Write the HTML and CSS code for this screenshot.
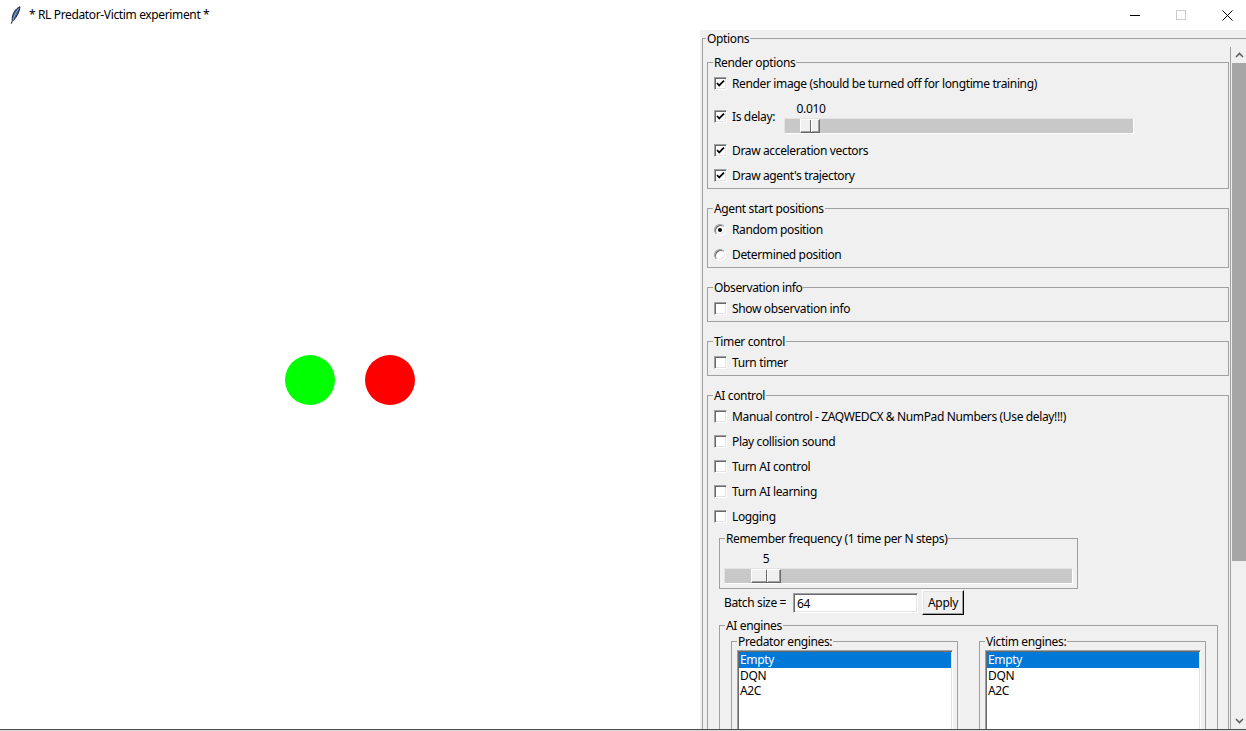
FILE: index.html
```html
<!DOCTYPE html>
<html>
<head>
<meta charset="utf-8">
<title>RL Predator-Victim experiment</title>
<link rel="stylesheet" href="styles.css">
</head>
<body>
<div class="window">
  <div class="titlebar">
    <svg class="feather" viewBox="0 0 12 18" width="12" height="18">
      <path d="M11 0.8 C6.5 2.5 3 7.5 3.2 14.5 L4.4 14.5 C7.5 11 10.4 6.5 11 0.8 Z" fill="#3f5f95" stroke="#16223a" stroke-width="1"/>
      <path d="M10 2.5 C7 6 5 10 3.8 14.6" fill="none" stroke="#b9c9e3" stroke-width="0.7"/>
      <path d="M3.6 14.4 L2.2 17.6" stroke="#16223a" stroke-width="1.1"/>
    </svg>
    <span class="title">* RL Predator-Victim experiment *</span>
    <div class="controls">
      <div class="ctl"><span class="ctl-min"></span></div>
      <div class="ctl"><span class="ctl-max"></span></div>
      <div class="ctl">
        <svg viewBox="0 0 11 11" width="11" height="11"><path d="M0.5 0.5 L10.5 10.5 M10.5 0.5 L0.5 10.5" stroke="#000" stroke-width="1"/></svg>
      </div>
    </div>
  </div>

  <div class="main">
    <div class="canvas">
      <div class="agent agent-green"></div>
      <div class="agent agent-red"></div>
    </div>

    <div class="panel">
      <div class="options">
        <div class="gtitle opt-title">Options</div>
        <div class="scrollwrap">
          <div class="content">

            <div class="frame section first">
              <div class="gtitle">Render options</div>
              <div class="row"><span class="cb"><svg viewBox="0 0 11 11"><path d="M2 5 L4.2 7.4 L9 2.6" /></svg></span><span>Render image (should be turned off for longtime training)</span></div>
              <div class="row delay-row">
                <div class="check delay-check"><span class="cb"><svg viewBox="0 0 11 11"><path d="M2 5 L4.2 7.4 L9 2.6" /></svg></span><span>Is delay:</span></div>
                <div class="slider delay-slider">
                  <div class="sval sval-delay">0.010</div>
                  <div class="trough trough-delay"><div class="thumb thumb-delay"></div></div>
                </div>
              </div>
              <div class="row"><span class="cb"><svg viewBox="0 0 11 11"><path d="M2 5 L4.2 7.4 L9 2.6" /></svg></span><span>Draw acceleration vectors</span></div>
              <div class="row"><span class="cb"><svg viewBox="0 0 11 11"><path d="M2 5 L4.2 7.4 L9 2.6" /></svg></span><span>Draw agent's trajectory</span></div>
            </div>

            <div class="frame section">
              <div class="gtitle">Agent start positions</div>
              <div class="row"><span class="rb rb-on"></span><span>Random position</span></div>
              <div class="row"><span class="rb"></span><span>Determined position</span></div>
            </div>

            <div class="frame section">
              <div class="gtitle">Observation info</div>
              <div class="row"><span class="cb"></span><span>Show observation info</span></div>
            </div>

            <div class="frame section">
              <div class="gtitle">Timer control</div>
              <div class="row"><span class="cb"></span><span>Turn timer</span></div>
            </div>

            <div class="frame section">
              <div class="gtitle">AI control</div>
              <div class="row"><span class="cb"></span><span>Manual control - ZAQWEDCX &amp; NumPad Numbers (Use delay!!!)</span></div>
              <div class="row"><span class="cb"></span><span>Play collision sound</span></div>
              <div class="row"><span class="cb"></span><span>Turn AI control</span></div>
              <div class="row"><span class="cb"></span><span>Turn AI learning</span></div>
              <div class="row"><span class="cb"></span><span>Logging</span></div>

              <div class="sub">
                <div class="frame remember">
                  <div class="gtitle">Remember frequency (1 time per N steps)</div>
                  <div class="slider remember-slider">
                    <div class="sval sval-remember">5</div>
                    <div class="trough trough-remember"><div class="thumb thumb-remember"></div></div>
                  </div>
                </div>

                <div class="batch">
                  <span class="batch-label">Batch size =</span>
                  <div class="entry">64</div>
                  <div class="button">Apply</div>
                </div>

                <div class="frame engines">
                  <div class="gtitle">AI engines</div>
                  <div class="engine-row">
                    <div class="frame engine">
                      <div class="gtitle">Predator engines:</div>
                      <div class="listbox">
                        <div class="item selected">Empty</div>
                        <div class="item">DQN</div>
                        <div class="item">A2C</div>
                      </div>
                    </div>
                    <div class="frame engine">
                      <div class="gtitle">Victim engines:</div>
                      <div class="listbox">
                        <div class="item selected">Empty</div>
                        <div class="item">DQN</div>
                        <div class="item">A2C</div>
                      </div>
                    </div>
                  </div>
                </div>
              </div>
            </div>

          </div>
          <div class="scrollbar">
            <div class="sb-btn sb-up"><svg viewBox="0 0 9 6" width="9" height="6"><path d="M1 5 L4.5 1.5 L8 5" fill="none" stroke="#606060" stroke-width="1.6"/></svg></div>
            <div class="sb-thumb"></div>
            <div class="sb-track"></div>
            <div class="sb-btn sb-down"><svg viewBox="0 0 9 6" width="9" height="6"><path d="M1 1 L4.5 4.5 L8 1" fill="none" stroke="#606060" stroke-width="1.6"/></svg></div>
          </div>
        </div>
      </div>
    </div>
  </div>
  <div class="bottomline"></div>
</div>
</body>
</html>
```

FILE: styles.css
```css
* { box-sizing: border-box; }

body {
  margin: 0;
  font-family: "Noto Sans", "Open Sans", sans-serif;
  font-size: 12px;
  letter-spacing: -0.36px;
  color: #000;
  background: #fff;
  overflow: hidden;
}

.window {
  width: 1246px;
  height: 731px;
  display: flex;
  flex-direction: column;
  overflow: hidden;
}

/* Title bar */
.titlebar {
  height: 30px;
  flex: none;
  display: flex;
  align-items: center;
  background: #fff;
}
.feather { margin-left: 9px; flex: none; }
.title { margin-left: 8px; line-height: 16px; }
.controls {
  margin-left: auto;
  margin-right: -4px;
  display: flex;
  height: 30px;
}
.ctl {
  width: 46px;
  display: flex;
  align-items: center;
  justify-content: center;
}
.ctl-min { width: 10px; height: 1px; background: #000; }
.ctl-max { width: 10px; height: 10px; border: 1px solid #cccccc; }

/* Main area */
.main {
  height: 699px;
  flex: none;
  display: flex;
  overflow: hidden;
}
.canvas {
  width: 700px;
  flex: none;
  position: relative;
  background: #fff;
}
.agent {
  position: absolute;
  top: 325px;
  width: 50px;
  height: 50px;
  border-radius: 50%;
}
.agent-green { left: 285px; background: #00ff00; }
.agent-red { left: 365px; background: #ff0000; }

.panel {
  flex: 1;
  min-width: 0;
  background: #f0f0f0;
  padding: 8px 0 0 2px;
  overflow: hidden;
}
.options {
  height: 100%;
  border-left: 1px solid #a0a0a0;
  border-top: 1px solid #a0a0a0;
  display: flex;
  flex-direction: column;
}

/* labelframe title */
.gtitle {
  align-self: flex-start;
  height: 16px;
  line-height: 18px;
  margin: -9px 0 1px 5px;
  padding: 0 1px;
  background: #f0f0f0;
  white-space: nowrap;
}
.opt-title { margin-left: 3px; }

.scrollwrap {
  flex: 1;
  min-height: 0;
  display: flex;
}
.content {
  width: 527px;
  flex: none;
  overflow: hidden;
}

.frame {
  border: 1px solid #a0a0a0;
  display: flex;
  flex-direction: column;
}
.section { margin: 19px 1px 0 4px; }
.section.first { margin-top: 15px; }

.row {
  height: 25px;
  flex: none;
  display: flex;
  align-items: center;
  padding-left: 6px;
  white-space: nowrap;
}
.check { display: flex; align-items: center; height: 25px; }

/* checkbox */
.cb {
  width: 13px;
  height: 13px;
  flex: none;
  margin-right: 5px;
  background: #fff;
  border: 1px solid;
  border-color: #a0a0a0 #ffffff #ffffff #a0a0a0;
  box-shadow: inset 1px 1px 0 #696969, inset -1px -1px 0 #e3e3e3;
  display: flex;
}
.cb svg { width: 11px; height: 11px; }
.cb path { fill: none; stroke: #000; stroke-width: 1.7; }

/* radio */
.rb {
  width: 12px;
  height: 12px;
  flex: none;
  margin-right: 6px;
  border-radius: 50%;
  background: #fff;
  border: 1px solid;
  border-color: #a0a0a0 #ffffff #ffffff #a0a0a0;
  box-shadow: inset 1px 1px 0 #696969, inset -1px -1px 0 #e3e3e3;
  display: flex;
  align-items: center;
  justify-content: center;
}
.rb-on::after {
  content: "";
  width: 4px;
  height: 4px;
  border-radius: 50%;
  background: #000;
}

/* delay row with scale */
.delay-row { height: 42px; align-items: flex-start; }
.delay-check { width: 71px; margin-top: 8px; }
.slider { display: flex; flex-direction: column; }
.delay-slider { margin-top: 4px; }
.sval {
  height: 16px;
  line-height: 18px;
  display: flex;
  justify-content: center;
  white-space: nowrap;
}
.sval-delay { width: 20px; margin-left: 16px; }
.trough {
  margin-top: 2px;
  height: 16px;
  background: #c8c8c8;
  border: 1px solid;
  border-color: #e3e3e3 #ffffff #ffffff #e3e3e3;
  display: flex;
  align-items: stretch;
}
.trough-delay { width: 350px; margin-left: -1px; }
.thumb {
  height: 14px;
  background: #f0f0f0;
  border: 1px solid;
  border-color: #ffffff #696969 #696969 #ffffff;
  box-shadow: inset -1px -1px 0 #a0a0a0;
  display: flex;
  justify-content: center;
}
.thumb::before {
  content: "";
  width: 1px;
  background: #696969;
  box-shadow: 1px 0 0 #ffffff;
}
.thumb-delay { width: 20px; margin-left: 15px; }

/* AI control sub area */
.sub {
  margin-left: 11px;
  display: flex;
  flex-direction: column;
}
.remember {
  width: 359px;
  margin-top: 9px;
  padding-bottom: 4px;
}
.remember-slider { padding-left: 4px; margin-top: 3px; }
.sval-remember { width: 30px; margin-left: 27px; }
.trough-remember { width: 349px; }
.thumb-remember { width: 30px; margin-left: 26px; }

.batch {
  margin-top: 1px;
  height: 25px;
  display: flex;
  align-items: center;
  padding-left: 5px;
}
.batch-label { width: 69px; white-space: nowrap; }
.entry {
  width: 125px;
  height: 20px;
  background: #fff;
  border: 1px solid;
  border-color: #a0a0a0 #ffffff #ffffff #a0a0a0;
  box-shadow: inset 1px 1px 0 #696969, inset -1px -1px 0 #e3e3e3;
  padding-left: 3px;
  line-height: 19px;
}
.button {
  width: 42px;
  height: 25px;
  margin-left: 4px;
  background: #f0f0f0;
  border: 1px solid;
  border-color: #ffffff #000000 #000000 #ffffff;
  box-shadow: inset -1px -1px 0 #a0a0a0, inset 1px 1px 0 #e3e3e3;
  display: flex;
  align-items: center;
  justify-content: center;
}

.engines {
  width: 499px;
  margin-top: 10px;
}
.engine-row {
  display: flex;
  gap: 21px;
  padding-left: 11px;
  margin-top: 7px;
}
.engine { width: 227px; }
.listbox {
  margin: 0 4px 0 5px;
  height: 120px;
  background: #fff;
  border: 1px solid;
  border-color: #a0a0a0 #ffffff #ffffff #a0a0a0;
  box-shadow: inset 1px 1px 0 #696969, inset -1px -1px 0 #e3e3e3;
  padding: 1px;
}
.item {
  height: 15.5px;
  line-height: 16.5px;
  padding-left: 1px;
  white-space: nowrap;
}
.item.selected { background: #0078d7; color: #fff; }

/* scrollbar */
.scrollbar {
  width: 16px;
  flex: none;
  border-left: 1px solid #a0a0a0;
  display: flex;
  flex-direction: column;
}
.sb-btn {
  display: flex;
  align-items: center;
  justify-content: center;
  padding-left: 1px;
}
.sb-up { height: 16px; }
.sb-down { height: 17px; }
.sb-thumb {
  height: 498px;
  margin-left: 1px;
  background: #a6a6a6;
}
.sb-track { flex: 1; }

.bottomline {
  height: 2px;
  flex: none;
  border-top: 1px solid #4d4d4d;
  background: #d8d8d8;
}
```
